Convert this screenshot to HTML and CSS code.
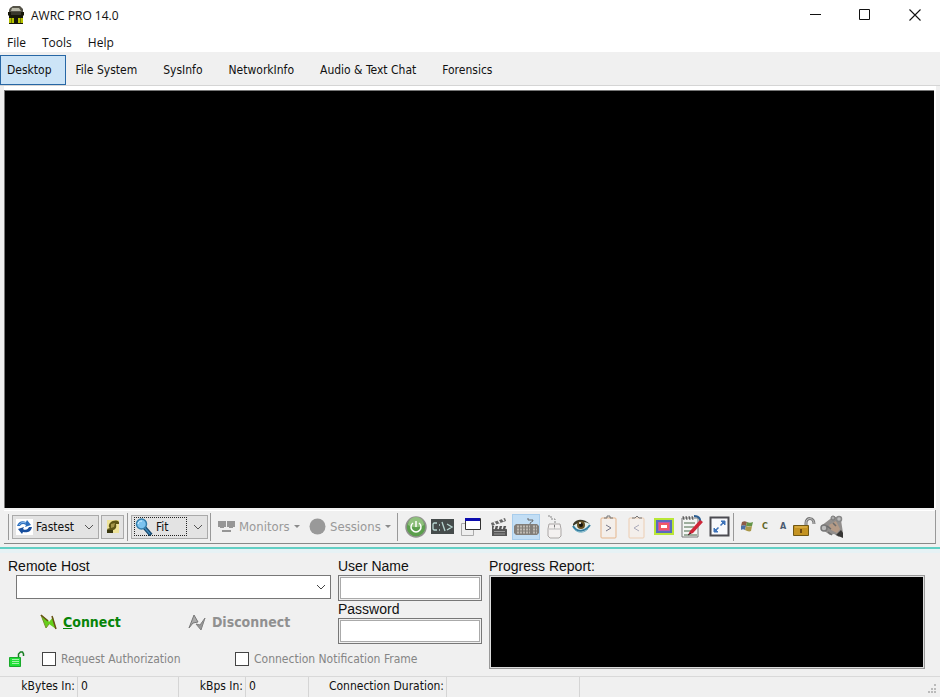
FILE: index.html
```html
<!DOCTYPE html>
<html lang="en">
<head>
<meta charset="utf-8">
<title>AWRC PRO 14.0</title>
<link rel="stylesheet" href="styles.css">
</head>
<body>
<div class="window">
  <header class="titlebar">
    <svg class="app-icon" width="18" height="18" viewBox="0 0 18 18"><path d="M3 2 6 0h7l3 3v5H2V4z" fill="#555348"/><path d="M5 2h7l2 3H4z" fill="#b9b9a8"/><path d="M1 6h16v3l-1 1v8H2v-8L1 9z" fill="#17170a"/><path d="M4 6h10v3H4z" fill="#39382c"/><path d="M2 12h5v5H2zM11 12h5v5h-5z" fill="#b5c100"/><path d="M4.500 12v5M13.500 12v5" stroke="#6f7700"/></svg>
    <h1>AWRC PRO 14.0</h1>
    <div class="caption">
      <button aria-label="Minimize"><svg width="12" height="12"><path d="M1 5.500h11" stroke="#111"/></svg></button>
      <button aria-label="Maximize"><svg width="12" height="12"><path d="M.5.500h10v10H.5z" fill="none" stroke="#111"/></svg></button>
      <button aria-label="Close"><svg width="12" height="12"><path d="m.5.500 11 11m0-11-11 11" stroke="#111" stroke-width="1.100"/></svg></button>
    </div>
  </header>
  <nav class="menu"><button>File</button><button>Tools</button><button>Help</button></nav>
  <nav class="tabs">
    <button class="active">Desktop</button><button>File System</button><button>SysInfo</button><button>NetworkInfo</button><button>Audio &amp; Text Chat</button><button>Forensics</button>
  </nav>
  <main class="screen"></main>

  <div class="toolbar">
    <button class="drop speed"><svg width="17" height="16" viewBox="0 0 17 16"><path fill="#fff" d="M0 0h17v16H0z"/><path d="M1 7C2 3 6 1 10 3l1-2 4 5-6 2 1-2C7 4 5 5 4 7z" fill="#2c6fbe"/><path d="M16 8c-1 5-5 6-9 5l-1 2-4-5 6-2-1 2c3 2 5 0 6-2z" fill="#174e9e"/><path d="M3 6c2-3 4-3 7-2" stroke="#8abdf0" fill="none"/></svg><span>Fastest</span><svg class="chev" width="10" height="6"><path d="m1 1 4 4 4-4" fill="none" stroke="#555"/></svg></button>
    <button class="drop paint" aria-label="Color depth"><svg width="14" height="14" viewBox="0 0 14 14"><path fill="#eee39a" d="M1 0h12v13H1z"/><path d="M4 3c3-3 7-3 9-1v2h-3c1 4-1 6-4 6l-4 1-1-2 3-1c-2-1-1-4 0-5z" fill="#5c5515"/><path d="m5 4 4-1-1 4-3 1z" fill="#a3964a"/><path d="M1 10h6v3H1z" fill="#39370f"/></svg></button>
    <i class="sep"></i>
    <button class="drop fit"><span class="focus"><svg width="18" height="18" viewBox="0 0 18 18"><path d="m9 9 7 8" stroke="#174a70" stroke-width="4"/><path d="m9 9 6 7" stroke="#3f86b5" stroke-width="1.500"/><circle cx="6.500" cy="6" r="5" fill="#7cc3ef" stroke="#347eac" stroke-width="1.500"/><path d="M3 6c0-2 2-3 4-3" stroke="#d9f2ff" fill="none"/></svg><span>Fit</span></span><svg class="chev" width="10" height="6"><path d="m1 1 4 4 4-4" fill="none" stroke="#555"/></svg></button>
    <i class="sep"></i>
    <button class="flat monitors" disabled><svg width="17" height="12" viewBox="0 0 17 12"><path d="M0 0h8v6H6v1H2V6H0zM9 0h8v6h-2v1h-4V6H9zM4 9h9v2H4z" fill="#969696"/></svg><span>Monitors</span><svg width="6" height="3"><path d="M0 0h6L3 3z" fill="#8a8a8a"/></svg></button>
    <button class="flat sessions" disabled><svg width="17" height="17"><circle cx="8.500" cy="8.500" r="8" fill="#999"/></svg><span>Sessions</span><svg width="6" height="3"><path d="M0 0h6L3 3z" fill="#8a8a8a"/></svg></button>
    <i class="sep"></i>
    <div class="icons">
      <button aria-label="Power"><svg width="22" height="22" viewBox="0 0 22 22"><circle cx="11" cy="11" r="10" fill="#5c9f4d" stroke="#91918f" stroke-width="1.500"/><path d="M3 9a8 8 0 0 1 16 0c-5 3-11 3-16 0z" fill="#8fc07d"/><path d="M8 7a5 5 0 1 0 6 0" fill="none" stroke="#fff" stroke-width="1.500"/><path d="M11 5v6" stroke="#fff" stroke-width="1.500"/></svg></button>
      <button aria-label="Command prompt"><svg width="24" height="16" viewBox="0 0 24 16"><path fill="#454b4b" d="M0 0h23v15H0z"/><path d="M6 4H3L2 5v5l1 1h3M8 6h1M8 11h1M11 3l3 9M16 5l5 3-5 3" fill="none" stroke="#b7d5d1" stroke-width="1.300"/></svg></button>
      <button aria-label="Windows"><svg width="20" height="20" viewBox="0 0 20 20"><path d="M.5 6.500h12v12H.5z" fill="#eee" stroke="#aaa"/><path d="M4.500 1.500h15v11h-15z" fill="#fff" stroke="#333"/><path d="M4 1h15v3H4z" fill="#0c0cae"/></svg></button>
      <button aria-label="Record"><svg width="18" height="20" viewBox="0 0 18 20"><path d="m1 6 14-5 1 3L2 9z" fill="#666"/><path d="m4 5 2 3m2-5 2 3m2-5 2 3" stroke="#eee" stroke-width="1.500"/><path d="M2 9h15v10H2z" fill="#555"/><path d="m5 9-1 3m5-3-1 3m5-3-1 3m5-3-1 3" stroke="#eee" stroke-width="1.500"/><path d="M4 14.500h11M4 17h11" stroke="#999"/></svg></button>
      <button class="pressed" aria-label="Keyboard"><svg width="25" height="19" viewBox="0 0 25 19"><path d="M16 7c0-3 3-1 3-4h-5V1" fill="none" stroke="#666"/><path d="M2 7h21l2 2v7l-2 2H2l-2-2V9z" fill="#827e79"/><path d="M3 9.500h13M3 12.500h13M3 15.500h13M19 9.500h4M19 12.500h4M19 15.500h4" stroke="#beb9b2" stroke-width="2" stroke-dasharray="2 1"/></svg></button>
      <button aria-label="Mouse"><svg width="16" height="24" viewBox="0 0 16 24"><path d="M9 8V4H5V1H1" stroke="#888" stroke-dasharray="2 1" fill="none"/><path d="M3 9h11l1 5v7l-2 2H4l-2-2v-7z" fill="#f4f1f0" stroke="#aaa6a5"/><path d="M3 14h11M8.500 9v5" stroke="#bbb"/><path d="M8.500 10v2" stroke="#777"/></svg></button>
      <button aria-label="View only"><svg width="19" height="15" viewBox="0 0 19 15"><path d="M1 6c4-7 13-6 17-1-5 7-12 6-17 1z" fill="#e2eee9"/><path d="M1 5C5-1 12 0 18 5c-5-3-11-3-17 2z" fill="#3c3928"/><circle cx="9" cy="6" r="4" fill="#645022"/><circle cx="9" cy="6" r="2" fill="#15130c"/><path d="M1 7c4 7 12 6 17-1" fill="none" stroke="#317d9f" stroke-width="2"/><path d="M3 11c5 4 10 2 13-1" fill="none" stroke="#79b5c9"/><circle cx="8" cy="4" r="1" fill="#fff"/></svg></button>
      <button aria-label="Send clipboard"><svg width="17" height="24" viewBox="0 0 17 24"><rect x="1" y="3" width="15" height="20" rx="1" fill="#f4efeb" stroke="#e5b58b"/><path d="M4 3h3V1h3v2h3" fill="none" stroke="#777"/><path d="m6 10 5 3-5 3" fill="none" stroke="#778"/></svg></button>
      <button aria-label="Get clipboard"><svg width="17" height="24" viewBox="0 0 17 24"><rect x="1" y="3" width="15" height="20" rx="1" fill="#f4efeb" stroke="#eccdb2"/><path d="M4 3h3l2-2 2 2h3" fill="none" stroke="#777"/><path d="m11 10-5 3 5 3" fill="none" stroke="#aab"/></svg></button>
      <button aria-label="Colors"><svg width="20" height="17" viewBox="0 0 20 17"><path fill="#b9e637" d="M0 0h20v17H0z"/><path fill="#586dbc" d="M2 2h16v13H2z"/><path fill="#bd55ae" d="M4 4h12v9H4z"/><path fill="#ef5965" d="M5 5h10v7H5z"/><path fill="#fff" d="M7 7h6v3H7z"/></svg></button>
      <button aria-label="Edit notes"><svg width="22" height="24" viewBox="0 0 22 24"><path d="M1 3h16v19H1z" fill="#f3f5f3" stroke="#777"/><path d="m2 1 1 4m2-4 1 4m2-4 1 4m2-4 1 4" stroke="#555"/><path d="M3 8h11M3 12h10M3 16h8M3 20h13" stroke="#819781" stroke-width="1.500"/><path d="M13 1c6 0 7 4 6 8" fill="none" stroke="#2b5e92" stroke-width="2"/><path d="m7 20 2-4L19 5l3 2-10 11z" fill="#cf2638"/><path d="m7 20 3-2" stroke="#333"/></svg></button>
      <button aria-label="Full screen"><svg width="21" height="21" viewBox="0 0 21 21"><path d="M1.500 1.500h18v18h-18z" fill="#f8f9fc" stroke="#4b4b51" stroke-width="2"/><path d="m11.500 9.500 3-3m-5 5-3 3" stroke="#3d73b9" stroke-width="1.500"/><path d="M12 5h4v4zM5 12v4h4z" fill="#3d73b9" stroke="#3d73b9"/></svg></button>
    </div>
    <i class="sep"></i>
    <div class="system">
      <button aria-label="Windows key"><svg width="12" height="11" viewBox="0 0 12 11"><path d="M1 1c2-1 3-1 5 0L5 5C3 4 2 4 0 5z" fill="#8d5b45"/><path d="M6 1c2 1 4 1 6 0l-1 4c-2 1-4 0-6 0z" fill="#649447"/><path d="M0 5c2-1 3-1 5 0l-1 4C3 8 1 8 0 9z" fill="#4a70a5"/><path d="M5 5c2 1 4 1 6 0l-1 5c-2 1-4 0-6-1z" fill="#a99747"/></svg></button>
      <button class="letter c">C</button>
      <button class="letter a">A</button>
      <button aria-label="Lock"><svg width="24" height="20" viewBox="0 0 24 20"><path d="M14 9V6c0-6 8-6 8 1" fill="none" stroke="#777" stroke-width="3"/><path d="M14 8V6c0-6 8-6 8 1" fill="none" stroke="#c6c6c6"/><path d="M1.500 8.500h15v10h-15z" fill="#c49322" stroke="#705714"/><path d="M3 10h12" stroke="#e8bd58"/><path d="M9 12v4" stroke="#704a13" stroke-width="2"/></svg></button>
      <button aria-label="Settings"><svg width="25" height="25" viewBox="0 0 25 25"><path d="M2 12 15 2l7 4 2 13-4 4-5-3-4 1-7-5z" fill="#918e8c"/><path d="m10 11 7-4 4 8-3 4-6-3z" fill="#b49a86"/><circle cx="5" cy="14" r="3" fill="#bbb" stroke="#777" stroke-width="1.500"/><circle cx="20" cy="5" r="2.500" fill="#bbb" stroke="#888" stroke-width="1.500"/><circle cx="14" cy="4" r="2" fill="#aaa" stroke="#777"/><path d="m17 21 5-5 2 3v5z" fill="#373634"/><path d="m9 18 4 3m-5-9 4 3m2-6 3 3" stroke="#6c6c6c" stroke-width="1.500"/></svg></button>
    </div>
  </div>

  <form class="connection">
    <section class="host">
      <label for="host">Remote Host</label>
      <div class="select"><select id="host"><option></option></select><svg width="10" height="6"><path d="m1 1 4 4 4-4" fill="none" stroke="#444"/></svg></div>
      <div class="actions">
        <button type="button" class="connect"><svg width="17" height="16" viewBox="0 0 17 16"><path d="m1 1 7 5 1 2 4-5 3 12-7-5-3 4z" fill="#65cf1b"/><path d="m1 1 5 13 3-4" fill="none" stroke="#79902a"/><path d="m1 1 7 6m4-5 4 13" stroke="#684f16" stroke-width="1.500"/></svg><span><u>C</u>onnect</span></button>
        <button type="button" class="disconnect" disabled><svg width="18" height="17" viewBox="0 0 18 17"><path d="M1 14 6 1l4 7-5 1z" fill="#aaa" stroke="#777"/><path d="m8 10 4 1 5-7-4 12z" fill="#999" stroke="#808080"/></svg><span>Disconnect</span></button>
      </div>
      <div class="checks">
        <svg width="17" height="16" viewBox="0 0 17 16"><path d="M10.500 7V3l2-2h2l1 2v2" fill="none" stroke="#167d22" stroke-width="1.500"/><path d="M1.500 6.500h11v9h-11z" fill="#21e038" stroke="#19a92b"/><path d="M4 8.500h7M4 10.500h7M4 12.500h7" stroke="#a3f1a9"/></svg>
        <label><input type="checkbox" disabled><span>Request Authorization</span></label>
        <label><input type="checkbox" disabled><span>Connection Notification Frame</span></label>
      </div>
    </section>
    <section class="login">
      <label for="user">User Name</label><input id="user" type="text">
      <label for="pass">Password</label><input id="pass" type="password">
    </section>
    <section class="report"><label for="log">Progress Report:</label><textarea id="log" readonly></textarea></section>
  </form>

  <footer class="status">
    <span class="bytes">kBytes In:</span><span class="value one">0</span><span class="rate">kBps In:</span><span class="value two">0</span><span class="duration">Connection Duration:</span><span class="value three"></span><span class="rest"></span>
    <svg width="10" height="10"><path d="M7 0h2v2H7zM7 4h2v2H7zM7 7h2v2H7zM4 4h2v2H4zM4 7h2v2H4zM1 7h2v2H1z" fill="#bbb"/></svg>
  </footer>
</div>
</body>
</html>
```
FILE: styles.css
```css
* { box-sizing: border-box; }
body { margin: 0; background: #f0f0f0; color: #111; font: 12px "DejaVu Sans Condensed", "DejaVu Sans", sans-serif; }
button { border: 0; padding: 0; background: none; font: inherit; color: inherit; white-space: nowrap; }
svg { display: block; flex: none; }
.window { min-height: 100vh; display: flex; flex-direction: column; }

.titlebar { display: flex; align-items: center; height: 30px; padding-left: 7px; background: #fff; }
.titlebar h1 { margin: 0 0 0 6px; font: 12px "Open Sans", sans-serif; }
.caption { display: flex; margin-left: auto; }
.caption button { width: 50px; height: 28px; display: grid; place-items: center; }
.menu { display: flex; gap: 16px; height: 22px; padding: 2px 0 0 7px; background: #fff; font: 12px "Open Sans", sans-serif; }

.tabs { display: flex; align-items: center; height: 34px; padding-top: 2px; border-bottom: 1px solid #d5d5d5; }
.tabs button { height: 30px; padding: 0 16px 0 10px; }
.tabs .active { padding: 0 13px 0 6px; background: #cce4f7; border: 1px solid #2767a5; }

.screen { flex: 1; margin: 0 4px; background: #000; border: solid #fff; border-width: 4px 2px 0 0; box-shadow: inset 1px 1px #777; }

.toolbar { display: flex; align-items: center; height: 34px; margin: 2px 4px 3px; padding-left: 4px; border-right: 1px solid #999; border-bottom: 1px solid #888; box-shadow: inset 0 1px #fff; }
.sep { flex: none; width: 1px; height: 28px; background: #999; }
.toolbar::before { content: ""; width: 1px; height: 26px; margin-right: 3px; background: #999; }
.drop { display: flex; align-items: center; height: 24px; background: #e3e3e3; border: 1px solid #aaa; }
.speed { width: 87px; padding: 0 4px 0 3px; gap: 3px; }
.chev { margin-left: auto; }
.paint { width: 23px; margin: 0 3px 0 2px; justify-content: center; }
.fit { width: 77px; margin: 0 2px 0 3px; padding: 0 4px 0 2px; }
.focus { display: flex; align-items: center; gap: 3px; width: 53px; height: 19px; border: 1px dotted #222; }
.flat { display: flex; align-items: center; gap: 4px; color: #999; font-size: 13px; }
.monitors { width: 83px; margin: 0 8px 0 7px; }
.sessions { width: 82px; margin-right: 6px; }
.icons { display: grid; grid-template-columns: repeat(12, 1fr); width: 331px; margin-left: 4px; flex: none; }
.icons button { height: 26px; display: grid; place-items: center; }
.icons .pressed { background: #c2def5; box-shadow: inset 0 0 0 1px #a8cdec; }
.system { display: flex; align-items: center; gap: 3px; margin-left: 7px; }
.letter { width: 12px; margin-left: 3px; font: bold 8px "DejaVu Sans", sans-serif; text-align: center; }
.c { color: #606629; }
.a { color: #4b5b70; }

.connection { display: grid; grid-template-columns: 331px 144px 1fr; column-gap: 7px; height: 129px; padding: 8px 15px 0 0; border-top: 2px solid #62cfc4; box-shadow: inset 0 4px #e6f2f5; }
.connection section { min-width: 0; display: flex; flex-direction: column; }
.host > label, .login label, .report label { font: 14px/18px "Liberation Sans", sans-serif; }
.host > label { padding-left: 8px; }
.select { position: relative; margin-left: 16px; }
.select select { display: block; width: 100%; height: 24px; appearance: none; background: #fff; border: 1px solid #777; border-radius: 0; }
.select svg { position: absolute; right: 5px; top: 9px; pointer-events: none; }
.actions { display: flex; gap: 67px; height: 20px; margin-top: 13px; padding-left: 40px; }
.actions button { display: flex; align-items: center; gap: 6px; font: bold 14px "DejaVu Sans Condensed", sans-serif; }
.connect { color: #078407; }
.actions .disconnect { color: #909090; }
.checks { display: flex; align-items: center; margin-top: 19px; padding-left: 8px; color: #858585; white-space: nowrap; }
.checks label { flex: none; display: flex; align-items: center; gap: 5px; width: 193px; margin-left: 17px; }
.checks label + label { width: auto; margin-left: 0; }
.checks input { flex: none; appearance: none; width: 14px; height: 14px; margin: 0; background: #fff; border: 1px solid #444; }
.login input { height: 26px; border: 1px solid #777; padding: 0 4px; background: #fff; box-shadow: inset 0 0 0 1px #f0f0f0, inset 0 0 0 2px #aaa; outline: 0; }
.login input + label { line-height: 17px; }
.report textarea { display: block; width: 100%; height: 94px; resize: none; border: 1px solid #999; background: #000; color: #fff; box-shadow: inset 0 0 0 1px #ddd; }

.status { display: flex; height: 21px; line-height: 19px; border-top: 1px solid #d9d9d9; white-space: nowrap; }
.status span { border-right: 1px solid #d5d5d5; text-align: right; }
.status .value { text-align: left; padding-left: 3px; }
.status .bytes { width: 78px; padding-right: 2px; }
.status .one { width: 101px; }
.status .rate { width: 67px; padding-right: 2px; }
.status .two { width: 63px; }
.status .duration { width: 138px; padding-right: 2px; }
.status .three { width: 133px; }
.status .rest { flex: 1; border: 0; }
.status svg { align-self: flex-end; margin: 0 3px 3px 0; }
```
